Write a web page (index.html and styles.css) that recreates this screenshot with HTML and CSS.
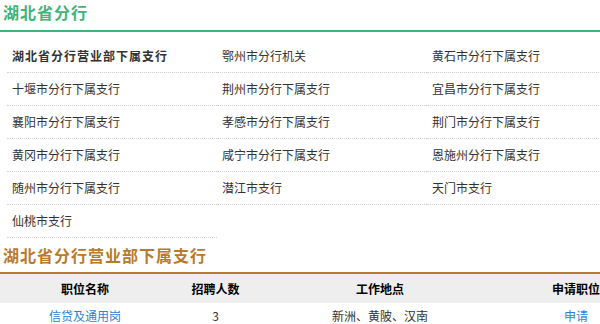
FILE: index.html
```html
<!DOCTYPE html>
<html lang="zh-CN">
<head>
<meta charset="utf-8">
<title>湖北省分行</title>
<link rel="stylesheet" href="styles.css">
</head>
<body>
<div class="page">
  <h2 class="title title-green">湖北省分行</h2>
  <ul class="branches">
    <li class="active">湖北省分行营业部下属支行</li>
    <li>鄂州市分行机关</li>
    <li>黄石市分行下属支行</li>
    <li>十堰市分行下属支行</li>
    <li>荆州市分行下属支行</li>
    <li>宜昌市分行下属支行</li>
    <li>襄阳市分行下属支行</li>
    <li>孝感市分行下属支行</li>
    <li>荆门市分行下属支行</li>
    <li>黄冈市分行下属支行</li>
    <li>咸宁市分行下属支行</li>
    <li>恩施州分行下属支行</li>
    <li>随州市分行下属支行</li>
    <li>潜江市支行</li>
    <li>天门市支行</li>
    <li>仙桃市支行</li>
  </ul>
  <h2 class="title title-brown">湖北省分行营业部下属支行</h2>
  <table class="jobs">
    <colgroup>
      <col class="c1"><col class="c2"><col class="c3"><col class="c4">
    </colgroup>
    <thead>
      <tr><th>职位名称</th><th>招聘人数</th><th>工作地点</th><th>申请职位</th></tr>
    </thead>
    <tbody>
      <tr><td><a class="link" href="#">信贷及通用岗</a></td><td>3</td><td>新洲、黄陂、汉南</td><td><a class="link" href="#">申请</a></td></tr>
    </tbody>
  </table>
</div>
</body>
</html>
```
FILE: styles.css
```css
html, body {
  margin: 0;
  padding: 0;
  overflow: hidden;
  background: #fff;
}
body {
  font-family: "Noto Sans CJK SC", "Noto Sans", sans-serif;
  font-size: 12px;
  color: #333;
}
.page {
  width: 600px;
  overflow: hidden;
}
.title {
  margin: 0;
  padding: 0 0 6px 3px;
  font-size: 16px;
  font-weight: bold;
  letter-spacing: 1px;
  line-height: 24px;
}
.title-green {
  color: #41b37c;
  border-bottom: 2px solid #41b37c;
}
.title-brown {
  color: #b97a2b;
  border-bottom: 2px solid #b97a2b;
  margin-top: 5px;
  padding-bottom: 5px;
}
.branches {
  list-style: none;
  margin: 8px 0 0 7px;
  padding: 0;
  display: grid;
  grid-template-columns: repeat(3, 210px);
}
.branches li {
  height: 32px;
  line-height: 32px;
  padding-left: 5px;
  border-bottom: 1px dotted #d0d0d0;
  white-space: nowrap;
}
.branches li.active {
  font-weight: bold;
  letter-spacing: 1px;
  color: #333;
}
.jobs {
  border-collapse: collapse;
  width: 653px;
}
.jobs .c1 { width: 170px; }
.jobs .c2 { width: 91px; }
.jobs .c3 { width: 238px; }
.jobs .c4 { width: 154px; }
.jobs th {
  height: 29px;
  padding: 0;
  background: #eee;
  color: #000;
  font-weight: bold;
  text-align: center;
}
.jobs td {
  height: 24px;
  padding: 0;
  text-align: center;
}
.link {
  color: #2f7fd8;
  text-decoration: none;
}
```
